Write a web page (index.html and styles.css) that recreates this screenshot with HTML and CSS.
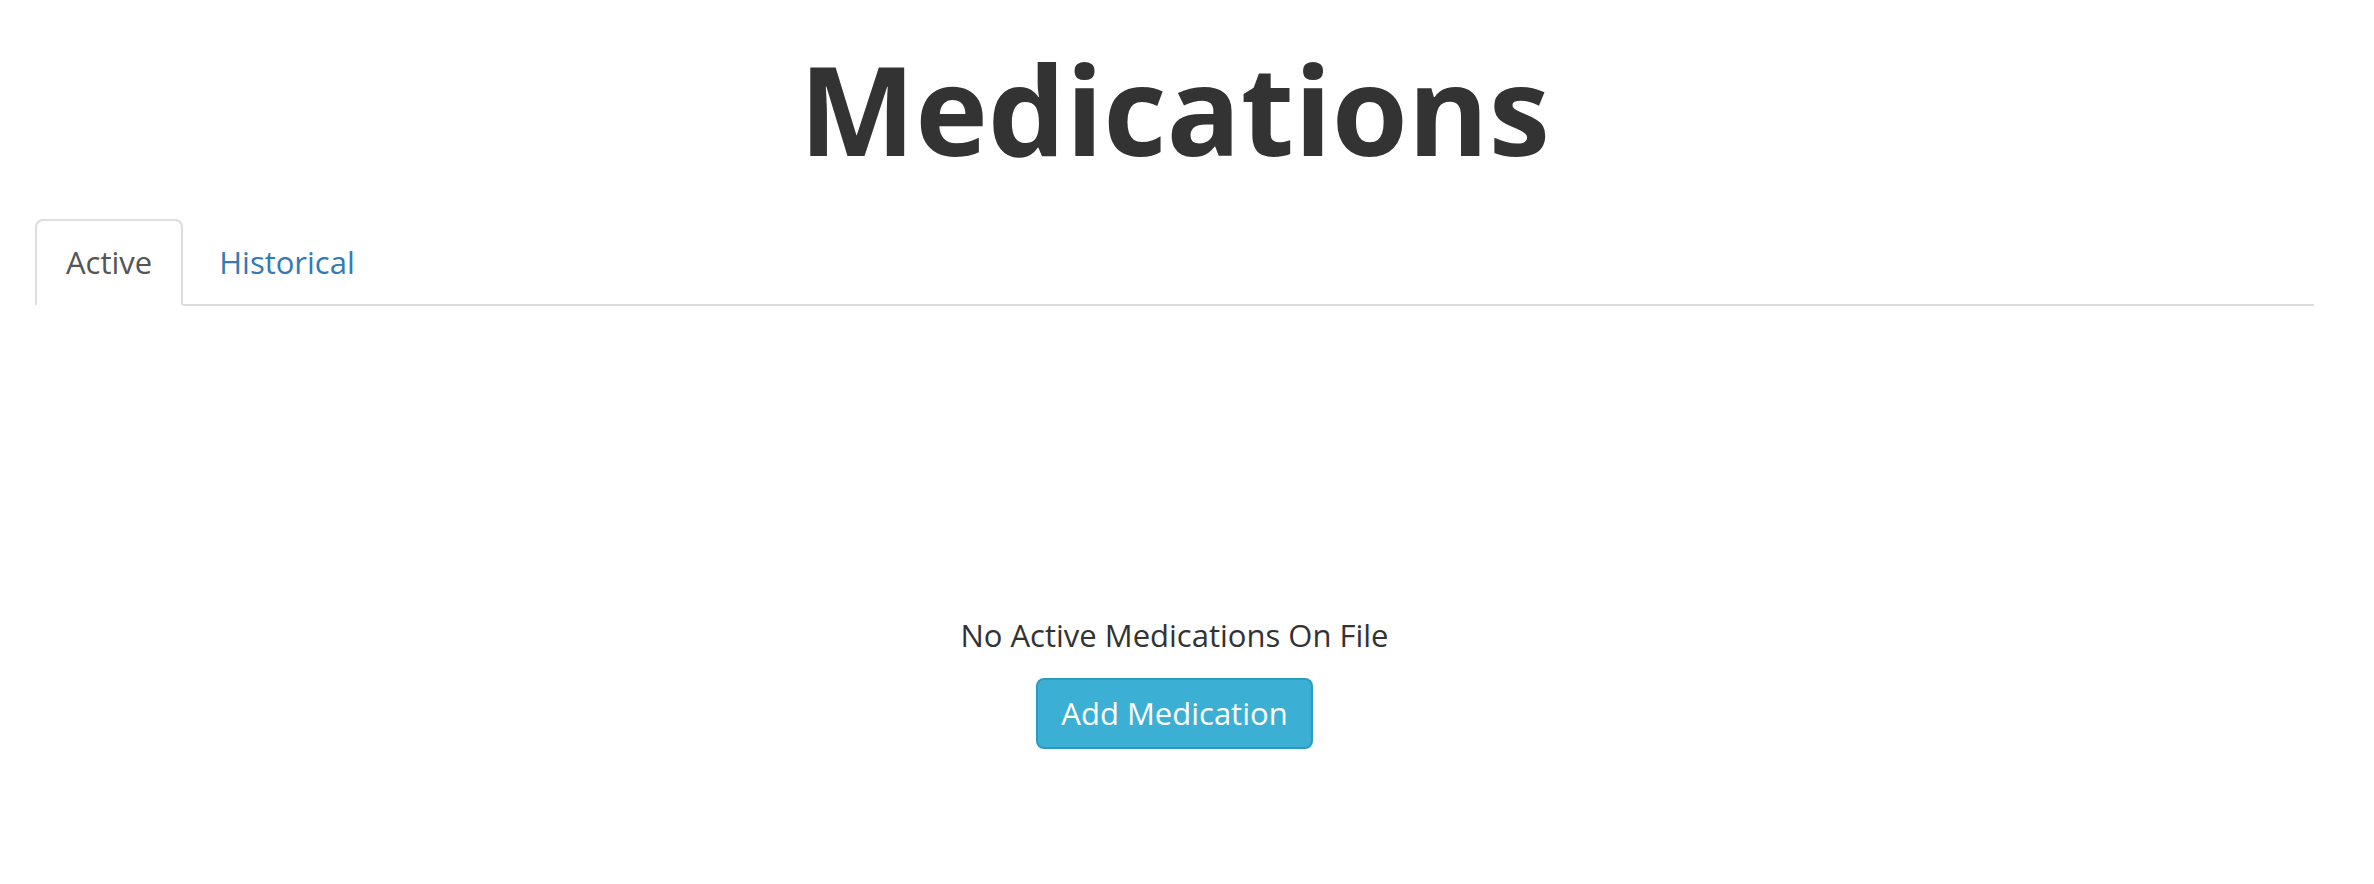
FILE: index.html
```html
<!DOCTYPE html>
<html lang="en">
<head>
<meta charset="utf-8">
<title>Medications</title>
<link rel="stylesheet" href="styles.css">
</head>
<body>
<div class="page">
  <h1 class="title">Medications</h1>
  <ul class="tabs">
    <li class="tab active">Active</li>
    <li class="tab link">Historical</li>
  </ul>
  <div class="empty">
    <p class="empty-text">No Active Medications On File</p>
    <button class="btn-info" type="button">Add Medication</button>
  </div>
</div>
</body>
</html>
```

FILE: styles.css
```css
html, body {
  margin: 0;
  padding: 0;
  background: #fff;
}
body {
  font-family: "Open Sans", "Noto Sans", "Liberation Sans", sans-serif;
  color: #333;
}
.page {
  padding: 41px 60px 0 35px;
}
.title {
  margin: 0 0 42px;
  text-align: center;
  font-weight: 700;
  font-size: 123px;
  line-height: 136px;
  color: #333;
}
.tabs {
  list-style: none;
  margin: 0;
  padding: 0;
  display: flex;
  border-bottom: 2px solid #ddd;
}
.tab {
  margin: 0 5px -2px 0;
  padding: 20px 29px;
  font-size: 31px;
  line-height: 43px;
  border: 2px solid transparent;
  border-radius: 8px 8px 0 0;
}
.tab.active {
  color: #555;
  background: #fff;
  border-color: #ddd #ddd transparent;
}
.tab.link {
  color: #337ab7;
}
.empty {
  padding-top: 308px;
  display: flex;
  flex-direction: column;
  align-items: center;
}
.empty-text {
  margin: 0;
  font-size: 31px;
  line-height: 43px;
  color: #333;
}
.btn-info {
  margin-top: 21px;
  padding: 12px 23px;
  font-family: inherit;
  font-size: 31px;
  line-height: 43px;
  color: #fff;
  background: #3bafd4;
  border: 2px solid #2b9cc0;
  border-radius: 8px;
}
```
